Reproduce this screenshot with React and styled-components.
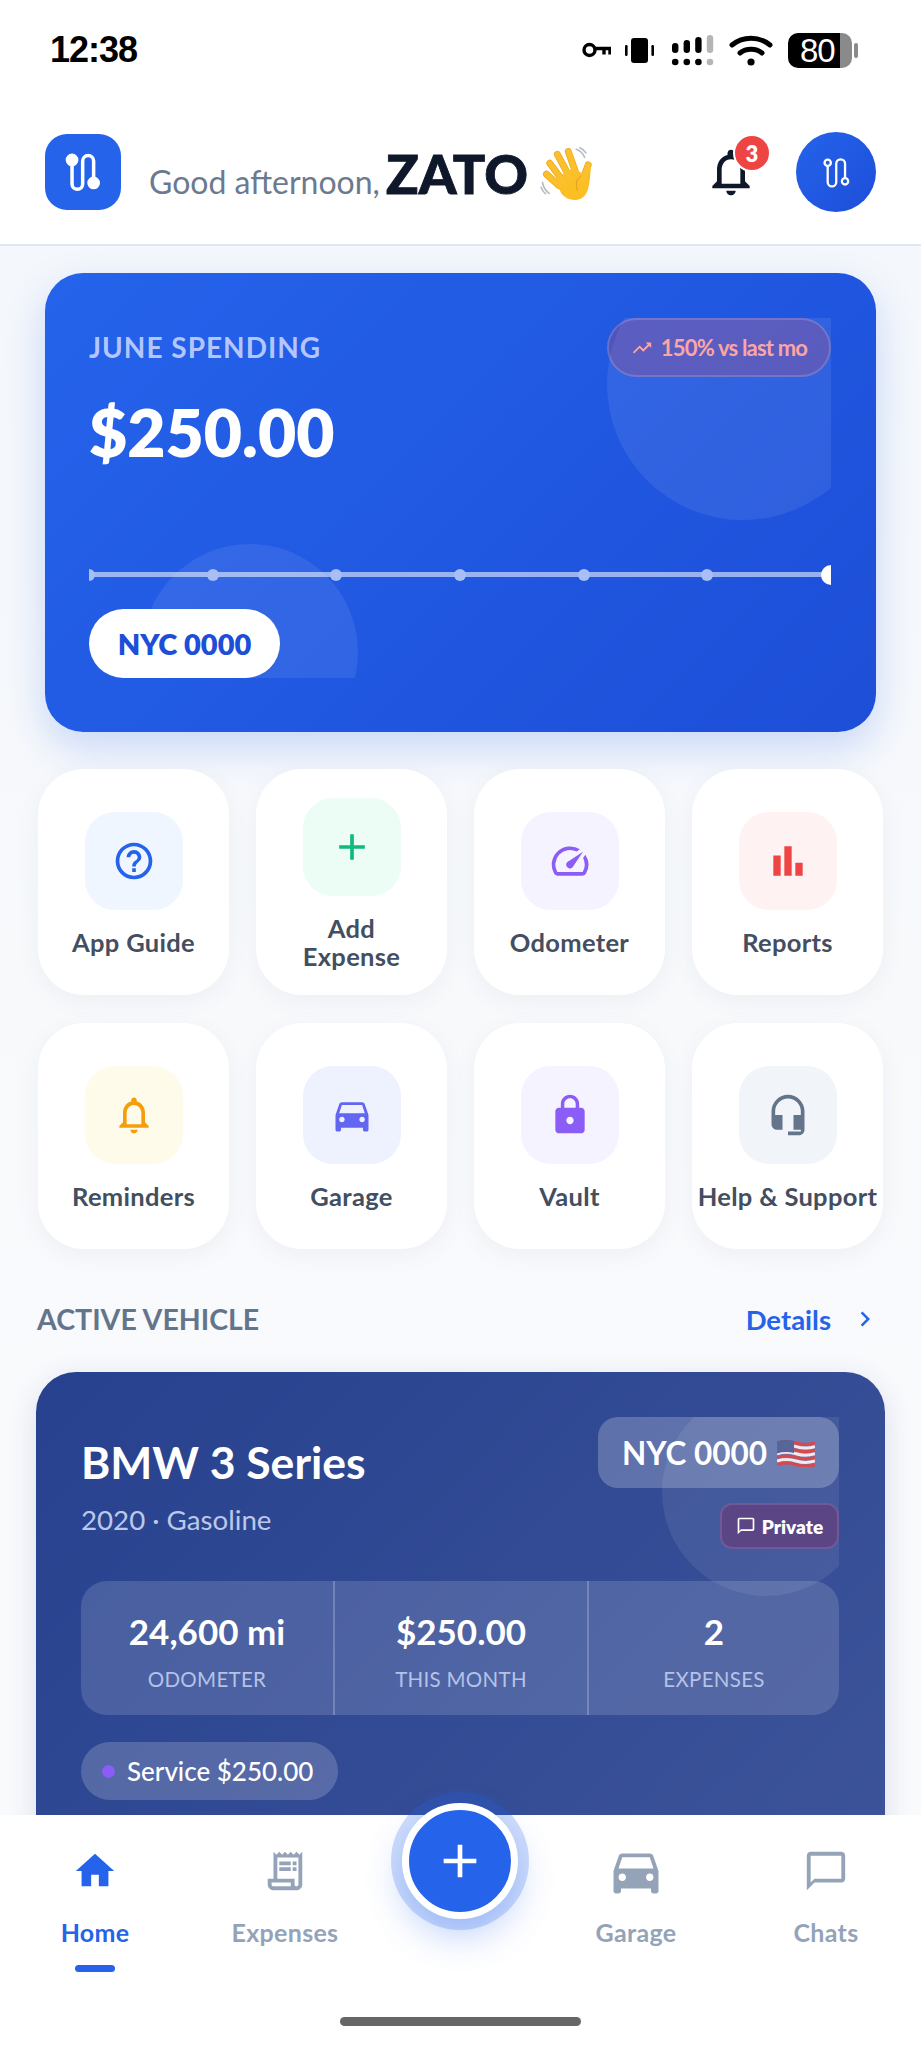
import React from 'react'
import styled, { createGlobalStyle } from 'styled-components'
import {
  MdHelpOutline, MdAdd, MdSpeed, MdBarChart, MdOutlineNotifications, MdDirectionsCar,
  MdLock, MdHeadsetMic, MdHome, MdOutlineReceiptLong, MdChatBubbleOutline, MdChevronRight,
  MdTrendingUp,
} from 'react-icons/md'

const font = '"Lato", "Noto Sans", sans-serif'

const GlobalStyle = createGlobalStyle`
  html, body { margin: 0; padding: 0; background: #fff; }
  body { font-family: ${font}; }
  * { box-sizing: border-box; }
`

const Screen = styled.div`
  width: 921px;
  height: 2048px;
  overflow: hidden;
  position: relative;
  background: linear-gradient(180deg, #f3f7fb 0%, #f9fafc 70%);
`

const StatusBar = styled.div`
  height: 100px;
  background: #fff;
  padding: 0 69px 0 50px;
  display: flex;
  align-items: center;
  justify-content: space-between;
`
const Clock = styled.div`
  font-family: "Liberation Sans", sans-serif;
  font-size: 36px;
  font-weight: 700;
  letter-spacing: -1px;
  color: #000;
`
const StatusIcons = styled.div`
  display: flex;
  align-items: center;
  gap: 14px;
`
const Battery = styled.div`
  width: 64px;
  height: 35px;
  border-radius: 10px;
  background: linear-gradient(90deg, #000 0 82%, #8a8a8a 82%);
  color: #fff;
  font-family: "Liberation Sans", sans-serif;
  font-size: 33px;
  line-height: 35px;
  letter-spacing: -1px;
  padding-left: 12px;
  position: relative;
  &::after {
    content: '';
    position: absolute;
    right: -6px;
    top: 10px;
    width: 4px;
    height: 15px;
    border-radius: 2px;
    background: #8a8a8a;
  }
`

const Header = styled.header`
  height: 146px;
  background: #fff;
  border-bottom: 2px solid #dfe8f0;
  padding: 0 45px;
  display: flex;
  align-items: center;
`
const LogoTile = styled.div`
  width: 76px;
  height: 76px;
  border-radius: 22px;
  background: #2563eb;
  display: flex;
  align-items: center;
  justify-content: center;
`
const Greeting = styled.div`
  margin-left: 28px;
  margin-top: 2px;
  display: flex;
  align-items: baseline;
  font-size: 32px;
  color: #6b7a90;
  flex: 1;
`
const Name = styled.span`
  font-size: 54px;
  font-weight: 900;
  -webkit-text-stroke: 0.8px #0f172a;
  color: #0f172a;
  margin: 0 11px 0 6px;
`
const HandWrap = styled.span`
  align-self: center;
  display: flex;
  margin-top: 4px;
`
const HeaderActions = styled.div`
  display: flex;
  align-items: center;
  gap: 37px;
`
const BellWrap = styled.div`
  position: relative;
  width: 56px;
  height: 56px;
  color: #0f172a;
  font-size: 56px;
  display: flex;
`
const BellBadge = styled.span`
  position: absolute;
  top: -10px;
  right: -12px;
  width: 38px;
  height: 38px;
  border-radius: 50%;
  border: 2px solid #fff;
  background: #ef4444;
  color: #fff;
  font-size: 22px;
  font-weight: 800;
  display: flex;
  align-items: center;
  justify-content: center;
`
const Avatar = styled.div`
  width: 80px;
  height: 80px;
  border-radius: 50%;
  background: linear-gradient(135deg, #2563eb, #1d4ed8);
  display: flex;
  align-items: center;
  justify-content: center;
`

const Content = styled.main`
  padding: 27px 38px 0;
`
const SpendCard = styled.section`
  margin: 0 7px;
  height: 459px;
  border-radius: 38px;
  padding: 45px 45px 54px 44px;
  background: linear-gradient(135deg, #2563eb 0%, #1d4ed8 100%);
  box-shadow: 0 16px 40px rgba(37, 99, 235, 0.22);
`
const SpendInner = styled.div`
  position: relative;
  height: 100%;
  overflow: hidden;
  display: flex;
  flex-direction: column;
`
const Bubble = styled.span`
  position: absolute;
  border-radius: 50%;
  background: rgba(255, 255, 255, 0.08);
  width: ${p => p.$size}px;
  height: ${p => p.$size}px;
  ${p => p.$css}
`
const SpendTop = styled.div`
  position: relative;
  display: flex;
  justify-content: space-between;
  align-items: flex-start;
`
const SpendLabel = styled.div`
  margin-top: 12px;
  font-size: 28px;
  font-weight: 700;
  letter-spacing: 1px;
  color: #b3c6ff;
`
const TrendBadge = styled.div`
  height: 59px;
  width: 224px;
  border-radius: 30px;
  background: rgba(239, 68, 68, 0.22);
  border: 2px solid rgba(255, 255, 255, 0.16);
  color: #fca5a5;
  font-size: 22px;
  font-weight: 700;
  letter-spacing: -0.8px;
  display: flex;
  align-items: center;
  justify-content: center;
  gap: 8px;
`
const Amount = styled.div`
  position: relative;
  margin-top: 17px;
  font-size: 66px;
  font-weight: 800;
  line-height: 76px;
  color: #fff;
`
const Track = styled.div`
  position: relative;
  margin-top: 102px;
  height: 5px;
  background: rgba(255, 255, 255, 0.55);
  display: flex;
  justify-content: space-between;
  align-items: center;
`
const TrackDot = styled.span`
  width: 12px;
  height: 12px;
  border-radius: 50%;
  background: ${p => (p.$last ? '#fff' : '#a9bef5')};
  transform: scale(${p => (p.$last ? 1.67 : 1)});
  margin-left: ${p => (p.$first ? -6 : 0)}px;
  margin-right: ${p => (p.$last ? -6 : 0)}px;
`
const PlatePill = styled.div`
  position: relative;
  margin-top: auto;
  align-self: flex-start;
  width: 191px;
  height: 69px;
  border-radius: 35px;
  background: #fff;
  color: #1d4ed8;
  font-size: 29px;
  font-weight: 800;
  display: flex;
  align-items: center;
  justify-content: center;
`

const ActionGrid = styled.div`
  margin-top: 37px;
  display: grid;
  grid-template-columns: repeat(4, 191px);
  grid-auto-rows: 226px;
  gap: 28px 27px;
`
const ActionTile = styled.div`
  background: #fff;
  border-radius: 46px;
  padding-top: 4px;
  box-shadow: 0 6px 22px rgba(100, 116, 139, 0.07);
  display: flex;
  flex-direction: column;
  align-items: center;
  justify-content: center;
  gap: 18px;
`
const ActionIcon = styled.div`
  width: 98px;
  height: 98px;
  border-radius: 30px;
  background: ${p => p.$bg};
  color: ${p => p.$fg};
  font-size: 44px;
  display: flex;
  align-items: center;
  justify-content: center;
`
const ActionLabel = styled.div`
  font-size: 25.5px;
  line-height: 28px;
  letter-spacing: 0.3px;
  font-weight: 700;
  color: #434e60;
  text-align: center;
  white-space: pre-line;
`

const SectionHead = styled.div`
  margin: 50px 3px 0 -1px;
  display: flex;
  align-items: center;
  justify-content: space-between;
  height: 40px;
`
const SectionTitle = styled.div`
  font-size: 28.5px;
  font-weight: 700;
  color: #64748b;
`
const DetailsLink = styled.div`
  display: flex;
  align-items: center;
  gap: 19px;
  font-size: 27.5px;
  font-weight: 700;
  color: #2563eb;
`

const VehicleCard = styled.section`
  margin: 33px -2px 0 -2px;
  height: 520px;
  border-radius: 40px;
  padding: 45px 46px 0 45px;
  background: linear-gradient(135deg, #27418f 0%, #3d5499 100%);
  box-shadow: 0 8px 30px rgba(30, 58, 138, 0.14);
`
const VehicleInner = styled.div`
  position: relative;
  overflow: hidden;
  height: 100%;
  display: flex;
  flex-direction: column;
`
const VehicleTop = styled.div`
  position: relative;
  display: flex;
  justify-content: space-between;
  align-items: flex-start;
`
const VehicleName = styled.div`
  margin-top: 19px;
  font-size: 44.5px;
  line-height: 52px;
  font-weight: 700;
  color: #fff;
`
const VehicleMeta = styled.div`
  margin-top: 14px;
  font-size: 27.7px;
  line-height: 36px;
  color: #bcc8ea;
`
const VehicleTags = styled.div`
  display: flex;
  flex-direction: column;
  align-items: flex-end;
  gap: 15px;
`
const PlateTag = styled.div`
  width: 241px;
  height: 71px;
  border-radius: 20px;
  background: rgba(255, 255, 255, 0.22);
  color: #fff;
  font-size: 31.5px;
  font-weight: 700;
  display: flex;
  align-items: center;
  justify-content: center;
  gap: 10px;
`
const PrivateTag = styled.div`
  width: 119px;
  height: 46px;
  border-radius: 12px;
  background: #5c4585;
  border: 2px solid #6e5a9a;
  color: #fff;
  font-size: 19px;
  font-weight: 800;
  display: flex;
  align-items: center;
  justify-content: center;
  gap: 6px;
`
const StatsRow = styled.div`
  position: relative;
  margin-top: 32px;
  height: 134px;
  border-radius: 26px;
  background: rgba(255, 255, 255, 0.14);
  display: grid;
  grid-template-columns: 252px 254px 252px;
`
const Stat = styled.div`
  padding-top: 4px;
  display: flex;
  flex-direction: column;
  align-items: center;
  justify-content: center;
  gap: 15px;
  border-left: ${p => (p.$first ? 'none' : '2px solid rgba(255, 255, 255, 0.22)')};
`
const StatValue = styled.div`
  font-size: 35px;
  line-height: 42px;
  font-weight: 700;
  color: #fff;
`
const StatLabel = styled.div`
  font-size: 20.5px;
  line-height: 24px;
  letter-spacing: 0.3px;
  color: #b5c2e6;
`
const ServicePill = styled.div`
  margin-top: 27px;
  align-self: flex-start;
  width: 257px;
  height: 58px;
  border-radius: 29px;
  background: rgba(255, 255, 255, 0.18);
  color: #fff;
  font-size: 26px;
  font-weight: 500;
  padding-left: 21px;
  display: flex;
  align-items: center;
  gap: 12px;
`
const ServiceDot = styled.span`
  width: 13px;
  height: 13px;
  border-radius: 50%;
  background: #8b5cf6;
`

const BottomNav = styled.nav`
  position: absolute;
  left: 0;
  right: 0;
  bottom: 0;
  height: 233px;
  background: #fff;
  display: grid;
  grid-template-columns: 190px 190px 161px 190px 190px;
`
const NavItem = styled.div`
  padding-top: 32px;
  display: flex;
  flex-direction: column;
  align-items: center;
  color: ${p => (p.$active ? '#2563eb' : '#94a3b8')};
  font-weight: 700;
  font-size: 25px;
  letter-spacing: 0.3px;
`
const NavGlyph = styled.div`
  height: 48px;
  font-size: ${p => p.$size || 46}px;
  display: flex;
  align-items: center;
  justify-content: center;
`
const NavText = styled.div`
  margin-top: 23px;
  line-height: 28px;
`
const NavMarker = styled.span`
  margin-top: 19px;
  width: 40px;
  height: 7px;
  border-radius: 4px;
  background: #2563eb;
`
const Fab = styled.div`
  position: absolute;
  left: 402px;
  top: -12px;
  width: 116px;
  height: 116px;
  border-radius: 50%;
  background: #2563eb;
  border: 7px solid #fff;
  box-shadow: 0 0 0 11px rgba(37, 99, 235, 0.22), 0 16px 36px rgba(37, 99, 235, 0.3);
  color: #fff;
  font-size: 56px;
  display: flex;
  align-items: center;
  justify-content: center;
`
const HomeBar = styled.span`
  position: absolute;
  left: 340px;
  bottom: 22px;
  width: 241px;
  height: 9px;
  border-radius: 5px;
  background: #666;
`

const RouteMark = ({ size = 46, stroke = 3.2, hollow = false }) => (
  <svg width={size} height={size} viewBox="0 0 40 42" fill="none" stroke="#fff" strokeWidth={stroke} strokeLinecap="round">
    <path d="M10 12V32a4.85 4.85 0 0 0 9.7 0V11a5 5 0 0 1 10 0V28" />
    <circle cx="10" cy="10" r={hollow ? 3.6 : 4.2} fill={hollow ? '#2060e4' : '#fff'} />
    <circle cx="29.7" cy="31" r={hollow ? 3.6 : 4.2} fill={hollow ? '#1f58de' : '#fff'} />
  </svg>
)

const StatusGlyphs = () => (
  <>
    <svg width="29" height="16" viewBox="0 0 29 16" fill="none" stroke="#000" strokeWidth="3.4">
      <circle cx="7.5" cy="8" r="5.5" />
      <path d="M13 6.5h15v6M22 6.5v6" />
    </svg>
    <svg width="29" height="25" viewBox="0 0 29 25" fill="#000">
      <rect x="6" y="0" width="17" height="25" rx="3" />
      <rect x="0" y="7" width="2.6" height="11" rx="1.2" />
      <rect x="26.4" y="7" width="2.6" height="11" rx="1.2" />
    </svg>
    <svg width="47" height="31" viewBox="0 0 47 31">
      {[8, 5, 2, 0].map((top, i) => (
        <g key={i} fill={i === 3 ? '#b5b5b5' : '#000'}>
          <rect x={4 + i * 11.6} y={top} width="6.4" height={18 - top} rx="3.2" />
          <circle cx={7.2 + i * 11.6} cy="27" r="3.3" />
        </g>
      ))}
    </svg>
    <svg width="45" height="31" viewBox="0 0 45 31" fill="none" stroke="#000" strokeWidth="5" strokeLinecap="round">
      <path d="M3 10c11-9 27-9 38 0" />
      <path d="M11 18c6-5 16-5 22 0" />
      <circle cx="22" cy="27" r="3.6" fill="#000" stroke="none" />
    </svg>
  </>
)

const WaveHand = () => (
  <svg width="55" height="58" viewBox="60 45 165 175">
    <g stroke="#f2a91e" strokeWidth="21" strokeLinecap="round">
      <path d="M82 130 120 165" />
      <path d="M92 97 135 155" />
      <path d="M115 70 155 145" />
      <path d="M148 62 172 130" />
      <path d="M208 102 190 150" />
    </g>
    <path fill="#fbbf24" d="M105 145 165 110 198 135 216 105C214 140 212 165 205 182 192 214 150 216 128 190Z" />
    <g stroke="#fbc02d" strokeWidth="16" strokeLinecap="round">
      <path d="M82 130 120 165" />
      <path d="M92 97 135 155" />
      <path d="M115 70 155 145" />
      <path d="M148 62 172 130" />
      <path d="M208 102 190 150" />
    </g>
    <path fill="none" stroke="#e29a20" strokeWidth="3" d="M188 135c-16 8-20 28-12 45" />
    <path fill="none" stroke="#b3bcc6" strokeWidth="5" strokeLinecap="round" d="M172 55c12 4 20 12 25 24M183 50c8 3 14 9 18 16M70 155c2 14 8 24 20 33M66 170c3 8 7 14 13 19" />
  </svg>
)

const UsFlag = () => (
  <svg width="38" height="28" viewBox="0 0 38 28" fill="none">
    {[0, 1, 2, 3, 4, 5, 6].map(i => (
      <path key={i} d={`M0 ${4 + i * 3.6}q9.5 -3 19 0t19 0`} stroke={i % 2 ? '#f5e9ea' : '#d9474f'} strokeWidth="3" />
    ))}
    <path d="M0 2.5q8 -2.6 17 -.6v12q-9 -2 -17 .6z" fill="#56659a" />
  </svg>
)

const actions = [
  { label: 'App Guide', icon: <MdHelpOutline />, bg: '#eff6ff', fg: '#2563eb' },
  { label: 'Add\nExpense', icon: <MdAdd />, bg: '#ecfdf5', fg: '#10b981' },
  { label: 'Odometer', icon: <MdSpeed />, bg: '#f5f3ff', fg: '#8b5cf6' },
  { label: 'Reports', icon: <MdBarChart />, bg: '#fef2f2', fg: '#ef4444' },
  { label: 'Reminders', icon: <MdOutlineNotifications />, bg: '#fffbeb', fg: '#f59e0b' },
  { label: 'Garage', icon: <MdDirectionsCar />, bg: '#eef2ff', fg: '#6366f1' },
  { label: 'Vault', icon: <MdLock />, bg: '#f5f3ff', fg: '#8b5cf6' },
  { label: 'Help & Support', icon: <MdHeadsetMic />, bg: '#f1f5f9', fg: '#64748b' },
]

const stats = [
  { value: '24,600 mi', label: 'ODOMETER' },
  { value: '$250.00', label: 'THIS MONTH' },
  { value: '2', label: 'EXPENSES' },
]

export default function App() {
  return (
    <Screen>
      <GlobalStyle />
      <StatusBar>
        <Clock>12:38</Clock>
        <StatusIcons>
          <StatusGlyphs />
          <Battery>80</Battery>
        </StatusIcons>
      </StatusBar>
      <Header>
        <LogoTile><RouteMark /></LogoTile>
        <Greeting>
          Good afternoon,<Name>ZATO</Name><HandWrap><WaveHand /></HandWrap>
        </Greeting>
        <HeaderActions>
          <BellWrap>
            <MdOutlineNotifications />
            <BellBadge>3</BellBadge>
          </BellWrap>
          <Avatar><RouteMark size={37} stroke={2.6} hollow /></Avatar>
        </HeaderActions>
      </Header>

      <Content>
        <SpendCard>
          <SpendInner>
            <Bubble $size={272} $css="right: -48px; top: -70px;" />
            <Bubble $size={216} $css="left: 53px; bottom: -82px;" />
            <SpendTop>
              <SpendLabel>JUNE SPENDING</SpendLabel>
              <TrendBadge><MdTrendingUp size={22} />150% vs last mo</TrendBadge>
            </SpendTop>
            <Amount>$250.00</Amount>
            <Track>
              {[0, 1, 2, 3, 4, 5, 6].map(i => (
                <TrackDot key={i} $first={i === 0} $last={i === 6} />
              ))}
            </Track>
            <PlatePill>NYC 0000</PlatePill>
          </SpendInner>
        </SpendCard>

        <ActionGrid>
          {actions.map(a => (
            <ActionTile key={a.label}>
              <ActionIcon $bg={a.bg} $fg={a.fg}>{a.icon}</ActionIcon>
              <ActionLabel>{a.label}</ActionLabel>
            </ActionTile>
          ))}
        </ActionGrid>

        <SectionHead>
          <SectionTitle>ACTIVE VEHICLE</SectionTitle>
          <DetailsLink>Details <MdChevronRight size={30} /></DetailsLink>
        </SectionHead>

        <VehicleCard>
          <VehicleInner>
            <Bubble $size={208} $css="right: -31px; top: -29px;" />
            <VehicleTop>
              <div>
                <VehicleName>BMW 3 Series</VehicleName>
                <VehicleMeta>2020 · Gasoline</VehicleMeta>
              </div>
              <VehicleTags>
                <PlateTag>NYC 0000 <UsFlag /></PlateTag>
                <PrivateTag><MdChatBubbleOutline size={20} />Private</PrivateTag>
              </VehicleTags>
            </VehicleTop>
            <StatsRow>
              {stats.map((s, i) => (
                <Stat key={s.label} $first={i === 0}>
                  <StatValue>{s.value}</StatValue>
                  <StatLabel>{s.label}</StatLabel>
                </Stat>
              ))}
            </StatsRow>
            <ServicePill><ServiceDot />Service $250.00</ServicePill>
          </VehicleInner>
        </VehicleCard>
      </Content>

      <BottomNav>
        <NavItem $active>
          <NavGlyph $size={46}><MdHome /></NavGlyph>
          <NavText>Home</NavText>
          <NavMarker />
        </NavItem>
        <NavItem>
          <NavGlyph $size={46}><MdOutlineReceiptLong /></NavGlyph>
          <NavText>Expenses</NavText>
        </NavItem>
        <div />
        <NavItem>
          <NavGlyph $size={60}><MdDirectionsCar /></NavGlyph>
          <NavText>Garage</NavText>
        </NavItem>
        <NavItem>
          <NavGlyph $size={46}><MdChatBubbleOutline /></NavGlyph>
          <NavText>Chats</NavText>
        </NavItem>
        <Fab><MdAdd /></Fab>
        <HomeBar />
      </BottomNav>
    </Screen>
  )
}
